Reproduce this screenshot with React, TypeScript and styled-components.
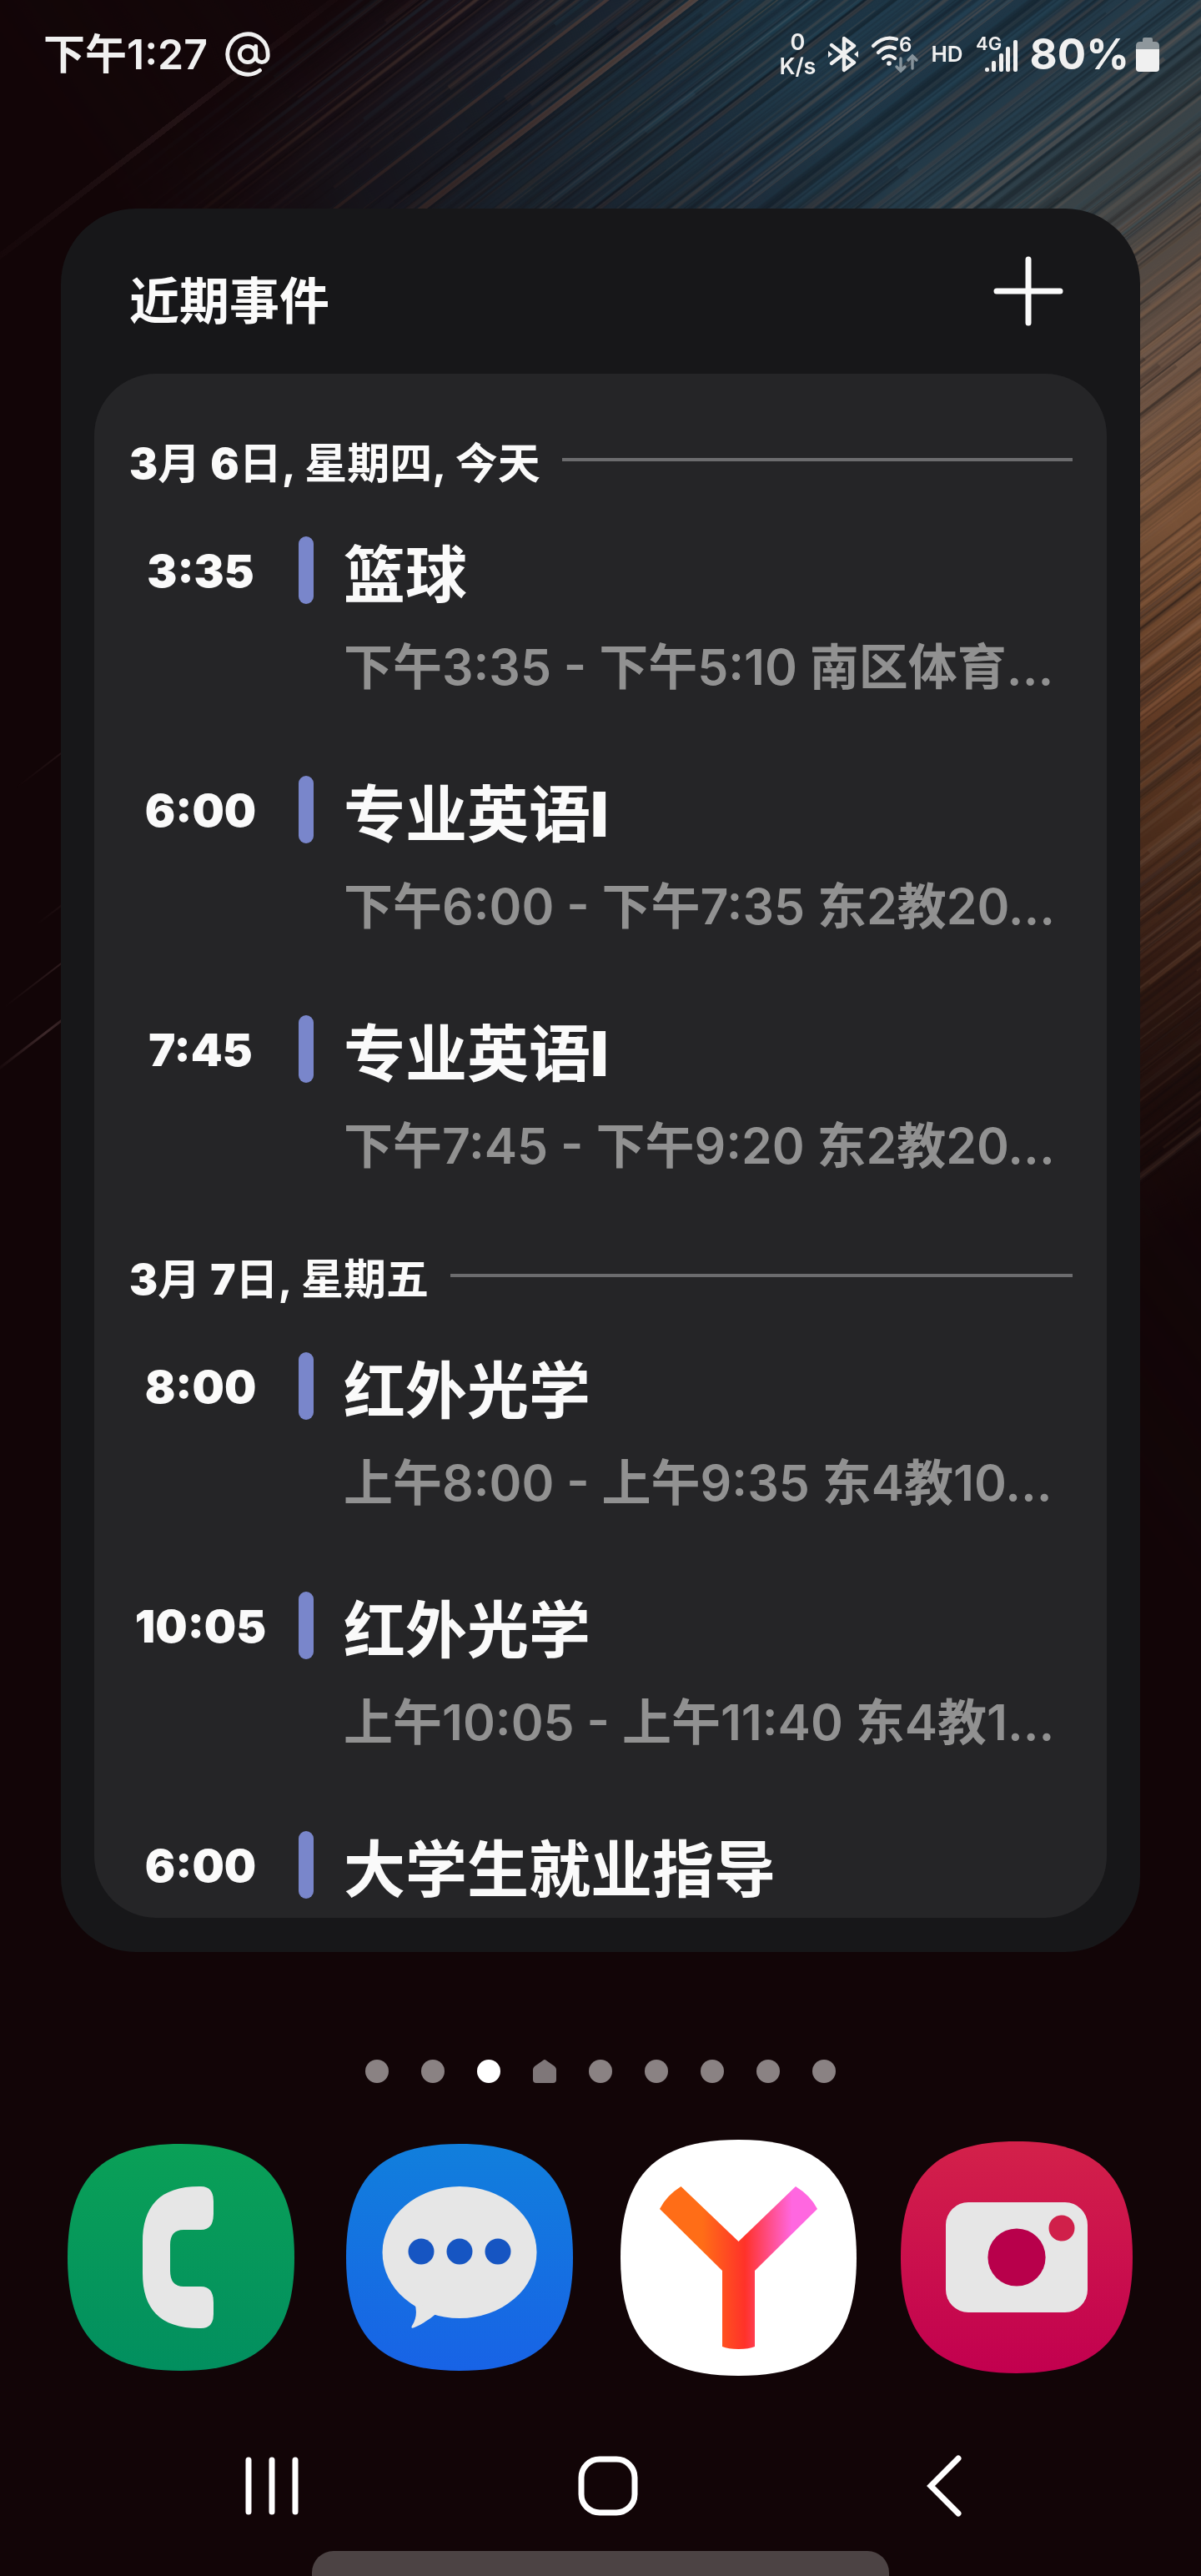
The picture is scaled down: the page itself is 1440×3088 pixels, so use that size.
import React from "react";
import styled, { createGlobalStyle } from "styled-components";
import { AtSign } from "lucide-react";

const GlobalStyle = createGlobalStyle`
  *, *::before, *::after { box-sizing: border-box; }
  body {
    margin: 0;
    background: #120507;
    font-family: Inter, "Noto Sans CJK SC", sans-serif;
    color: #fafafa;
  }
  h1, h2, h3, p, ul { margin: 0; padding: 0; font: inherit; }
  ul { list-style: none; }
  button { border: 0; padding: 0; background: none; color: inherit; cursor: pointer; }
  svg { display: block; }
`;

/* ---------- wallpaper ---------- */

const Screen = styled.div`
  position: relative;
  display: flex;
  flex-direction: column;
  min-height: 100vh;
  overflow: hidden;
`;

const WallpaperArt = styled.svg`
  position: absolute;
  inset: 0;
  width: 100%;
  height: 100%;
  z-index: -1;
`;

type Streak = { x: number; y: number; w: number; h: number; fill: string; o: number };

function makeStreaks(): Streak[] {
  let seed = 7;
  const rnd = () => {
    seed = (seed * 1664525 + 1013904223) % 4294967296;
    return seed / 4294967296;
  };
  const out: Streak[] = [];
  for (let i = 0; i < 760; i++) {
    const y = 260 + rnd() * 1700;
    const warm = y > 1050;
    const pick = rnd();
    const fill =
      pick < 0.5 ? "#05090f" : warm ? (pick < 0.75 ? "#a87450" : "#8c6e5c") : pick < 0.82 ? "#96705c" : "#2f6078";
    out.push({
      x: -300 + rnd() * 900,
      y,
      w: 900 + rnd() * 700,
      h: 1 + rnd() * rnd() * 8,
      fill,
      o: 0.06 + rnd() * 0.18,
    });
  }
  return out;
}
const streaks = makeStreaks();

const bands: [number, string][] = [
  [0, "#120507"],
  [250, "#14080c"],
  [350, "#1d1a24"],
  [430, "#1a2734"],
  [540, "#1c3342"],
  [760, "#1f3646"],
  [880, "#273d4a"],
  [980, "#3a4347"],
  [1080, "#4f4843"],
  [1200, "#6b5344"],
  [1340, "#775137"],
  [1520, "#71462a"],
  [1660, "#5a3620"],
  [1780, "#402417"],
  [1900, "#24120d"],
  [2030, "#120507"],
  [2400, "#120507"],
];

function Wallpaper() {
  return (
    <WallpaperArt viewBox="0 0 1440 3088" preserveAspectRatio="xMidYMin slice" aria-hidden="true">
      <defs>
        <linearGradient id="bands" x1="0" y1="0" x2="0" y2="1">
          {bands.map(([y, c]) => (
            <stop key={y} offset={y / 2400} stopColor={c} />
          ))}
        </linearGradient>
        <linearGradient id="fade" gradientUnits="userSpaceOnUse" x1="-40" y1="0" x2="740" y2="0">
          <stop offset="0" stopColor="#000" />
          <stop offset="0.3" stopColor="#606060" />
          <stop offset="0.7" stopColor="#c0c0c0" />
          <stop offset="1" stopColor="#fff" />
        </linearGradient>
        <mask id="fadeMask" maskUnits="userSpaceOnUse" x="-400" y="0" width="2100" height="2400">
          <rect x="-400" width="2100" height="2400" fill="url(#fade)" />
        </mask>
        <linearGradient id="hair" x1="0" y1="0" x2="1" y2="0">
          <stop offset="0" stopColor="#5a4042" stopOpacity="0" />
          <stop offset="0.5" stopColor="#5a4042" stopOpacity="0.6" />
          <stop offset="1" stopColor="#5a4042" stopOpacity="0" />
        </linearGradient>
      </defs>
      <rect width="1440" height="3088" fill="#120507" />
      <g transform="rotate(-37.5)">
        <g mask="url(#fadeMask)">
          <rect x="-400" width="2100" height="2400" fill="url(#bands)" />
          {streaks.map((s, i) => (
            <rect key={i} x={s.x} y={s.y} width={s.w} height={s.h} fill={s.fill} opacity={s.o} />
          ))}
          <rect x="120" y="503" width="700" height="7" fill="#8a6250" opacity="0.5" />
          <rect x="100" y="441" width="800" height="4" fill="#8a6250" opacity="0.4" />
        </g>
        <rect x="-240" y="240" width="620" height="7" fill="url(#hair)" opacity="0.35" />
        <rect x="-790" y="1014" width="160" height="3" fill="url(#hair)" />
        <rect x="-730" y="960" width="160" height="2" fill="url(#hair)" opacity="0.6" />
        <rect x="-640" y="905" width="180" height="2" fill="url(#hair)" opacity="0.6" />
        <rect x="-560" y="760" width="180" height="2" fill="url(#hair)" opacity="0.5" />
      </g>
    </WallpaperArt>
  );
}

/* ---------- status bar ---------- */

const StatusBar = styled.header`
  display: flex;
  align-items: center;
  justify-content: space-between;
  height: 130px;
  padding: 0 50px 0 52px;
  color: #f0f0f0;
`;

const StatusGroup = styled.div<{ $gap: number }>`
  display: flex;
  align-items: center;
  gap: ${(p) => p.$gap}px;
`;

const Clock = styled.span`
  font-size: 50px;
  line-height: 60px;
  font-weight: 600;
`;

const Speed = styled.span`
  display: flex;
  flex-direction: column;
  align-items: center;
  font-size: 27px;
  line-height: 29px;
  font-weight: 600;
`;

const Tag = styled.span`
  font-size: 26px;
  line-height: 32px;
  font-weight: 600;
`;

const Percent = styled.span`
  font-size: 51px;
  line-height: 60px;
  font-weight: 700;
`;

function BluetoothIcon() {
  return (
    <svg width="38" height="44" viewBox="0 0 38 44" fill="none" stroke="#f0f0f0" strokeWidth="4.4" strokeLinejoin="round" strokeLinecap="round">
      <path d="M5 11L32 32L20 41V3L32 12L5 33" />
      <path d="M1 18L6 22L1 26ZM37 18L32 22L37 26Z" fill="#f0f0f0" stroke="none" />
    </svg>
  );
}

function WifiIcon() {
  return (
    <svg width="58" height="64" viewBox="0 -10 58 64" fill="none" stroke="#f0f0f0" strokeWidth="4.2" strokeLinecap="round">
      <path d="M3 12Q16-1 31 4" />
      <path d="M9 20Q19 10 29 15" />
      <path d="M15 27Q22 21 29 27" />
      <circle cx="22" cy="33" r="2.8" fill="#f0f0f0" stroke="none" />
      <text x="34" y="19" fontSize="24" fontWeight="600" fill="#f0f0f0" stroke="none">6</text>
      <g stroke="#86939b" strokeWidth="3.4">
        <path d="M36 27V41M31 37L36 42L41 37" />
        <path d="M50 39V25M45 29L50 24L55 29" />
      </g>
    </svg>
  );
}

function SignalIcon() {
  return (
    <svg width="52" height="64" viewBox="0 -10 52 64" fill="#f0f0f0">
      <text x="1" y="17" fontSize="22" fontWeight="600">4G</text>
      <rect x="12" y="38" width="5" height="5" rx="2" />
      <rect x="20" y="30" width="5" height="13" rx="2" />
      <rect x="29" y="21" width="5" height="22" rx="2" />
      <rect x="37" y="13" width="5" height="30" rx="2" />
      <rect x="46" y="5" width="5" height="38" rx="2" />
    </svg>
  );
}

function BatteryIcon() {
  return (
    <svg width="28" height="42" viewBox="0 0 28 42">
      <path d="M8 3Q8 1 10 1H18Q20 1 20 3V6H23Q28 6 28 11V15H0V11Q0 6 5 6H8Z" fill="#8e979c" />
      <path d="M0 15H28V38Q28 42 24 42H4Q0 42 0 38Z" fill="#f0f0f0" />
    </svg>
  );
}

/* ---------- calendar widget ---------- */

const Widget = styled.section`
  display: flex;
  flex-direction: column;
  height: 2090px;
  margin: 120px 73px 0;
  padding: 0 40px 41px;
  border-radius: 90px;
  background: #171719;
`;

const WidgetHeader = styled.div`
  display: flex;
  align-items: flex-start;
  justify-content: space-between;
  flex: none;
  height: 198px;
  padding: 57px 52px 0 42px;
`;

const WidgetTitle = styled.h1`
  font-size: 60px;
  line-height: 108px;
  font-weight: 700;
`;

const AddButton = styled.button`
  display: block;
  width: 84px;
  height: 84px;
`;

const Agenda = styled.div`
  flex: 1;
  min-height: 0;
  overflow: hidden;
  padding: 78px 41px 0 42px;
  border-radius: 74px;
  background: #252527;
`;

const DayHeader = styled.div`
  display: flex;
  align-items: center;
  gap: 26px;
  height: 60px;
  margin-bottom: 57px;

  &::after {
    content: "";
    flex: 1;
    height: 4px;
    margin-bottom: 10px;
    background: #6c6c6e;
  }
`;

const DayName = styled.h2`
  font-size: 51px;
  line-height: 60px;
  font-weight: 700;
  white-space: nowrap;
`;

const Heavy = styled.span`
  font-weight: 900;
`;

const EventRow = styled.li`
  display: grid;
  grid-template-columns: 171px 18px minmax(0, 1fr);
  column-gap: 32px;
  height: 287px;
`;

const EventTime = styled.time`
  font-size: 54px;
  line-height: 84px;
  font-weight: 900;
  text-align: center;
`;

const EventBar = styled.span`
  height: 81px;
  border-radius: 9px;
  background: #7986cb;
`;

const EventText = styled.div`
  padding-left: 4px;
`;

const EventTitle = styled.h3`
  font-size: 74px;
  line-height: 92px;
  font-weight: 700;
  white-space: nowrap;
`;

const EventDetail = styled.p`
  margin-top: 20px;
  font-size: 59px;
  line-height: 90px;
  font-weight: 600;
  color: #919191;
  white-space: nowrap;
`;

/* Latin letters and digits are set heavier than the Chinese around them. */
function Mixed({ text }: { text: string }) {
  return (
    <>
      {text.split(/([0-9A-Z]+)/).map((part, i) => (i % 2 ? <Heavy key={i}>{part}</Heavy> : part))}
    </>
  );
}

type CalEvent = { time: string; title: string; detail: string };
const days: { name: string; events: CalEvent[] }[] = [
  {
    name: "3月 6日, 星期四, 今天",
    events: [
      { time: "3:35", title: "篮球", detail: "下午3:35 - 下午5:10 南区体育..." },
      { time: "6:00", title: "专业英语I", detail: "下午6:00 - 下午7:35 东2教20..." },
      { time: "7:45", title: "专业英语I", detail: "下午7:45 - 下午9:20 东2教20..." },
    ],
  },
  {
    name: "3月 7日, 星期五",
    events: [
      { time: "8:00", title: "红外光学", detail: "上午8:00 - 上午9:35 东4教10..." },
      { time: "10:05", title: "红外光学", detail: "上午10:05 - 上午11:40 东4教1..." },
      { time: "6:00", title: "大学生就业指导", detail: "" },
    ],
  },
];

/* ---------- page dots, dock, navigation ---------- */

const Pager = styled.div`
  display: flex;
  justify-content: center;
  gap: 39px;
  margin-top: 129px;
`;

const Dot = styled.button<{ $active?: boolean }>`
  width: 28px;
  height: 28px;
  border-radius: 50%;
  background: ${(p) => (p.$active ? "#ffffff" : "#8a8283")};
`;

const HomeDot = styled.button`
  width: 28px;
  height: 28px;
`;

const Dock = styled.nav`
  display: grid;
  grid-template-columns: repeat(4, 1fr);
  align-items: center;
  justify-items: center;
  height: 284px;
  margin-top: 67px;
  padding: 0 54px 0 50px;
`;

const NavBar = styled.nav`
  display: grid;
  grid-template-columns: repeat(3, 1fr);
  align-items: center;
  justify-items: center;
  height: 74px;
  margin-top: 95px;
  padding: 0 107px 0 125px;
`;

const Handle = styled.div`
  width: 48%;
  height: 30px;
  margin: auto auto 0;
  border-radius: 26px 26px 0 0;
  background: #4c4344;
`;

const SQUIRCLE = "M50 0C85 0 100 15 100 50S85 100 50 100 0 85 0 50 15 0 50 0Z";

function AppTile({ size, id, from, to, children }: { size: number; id: string; from: string; to: string; children: React.ReactNode }) {
  return (
    <svg width={size} height={size} viewBox={`0 0 ${size} ${size}`}>
      <defs>
        <linearGradient id={id} x1="0" y1="0" x2="0" y2="1">
          <stop offset="0" stopColor={from} />
          <stop offset="1" stopColor={to} />
        </linearGradient>
      </defs>
      <path d={SQUIRCLE} transform={`scale(${size / 100})`} fill={`url(#${id})`} />
      {children}
    </svg>
  );
}

function PhoneTile() {
  return (
    <AppTile size={272} id="phone" from="#0aa057" to="#028f5f">
      <path
        d="M158 51C110 51 90 75 90 118V155C90 197 110 221 158 221H160Q175 221 175 204V190Q175 171 160 171H139Q123 171 123 152V121Q123 103 139 103H160Q175 103 175 84V69Q175 51 160 51Z"
        fill="#e6e6e6"
      />
    </AppTile>
  );
}

function MessagesTile() {
  return (
    <AppTile size={272} id="messages" from="#117fdc" to="#1863e6">
      <ellipse cx="136" cy="130" rx="92.5" ry="79" fill="#e6e6e6" />
      <path d="M82 190Q87 206 79 218Q77 222 82 220Q96 214 110 202Z" fill="#e6e6e6" />
      <g fill="#1655c2">
        <circle cx="90" cy="129" r="15.5" />
        <circle cx="136" cy="129" r="15.5" />
        <circle cx="182" cy="129" r="15.5" />
      </g>
    </AppTile>
  );
}

function BrowserTile() {
  return (
    <AppTile size={283} id="browser" from="#ffffff" to="#ffffff">
      <defs>
        <linearGradient id="ray" gradientUnits="userSpaceOnUse" x1="47" y1="0" x2="236" y2="0">
          <stop offset="0.27" stopColor="#ff6d17" />
          <stop offset="0.54" stopColor="#ff3229" />
          <stop offset="0.84" stopColor="#ff67e0" />
        </linearGradient>
      </defs>
      <path
        d="M72.5 56L141.5 122L210 56Q228 67 236 83L161 157V248Q154 251 141.5 251T122 248V157L47 83Q55 67 72.5 56Z"
        fill="url(#ray)"
      />
    </AppTile>
  );
}

function CameraTile() {
  return (
    <AppTile size={278} id="camera" from="#d3214a" to="#c2004f">
      <rect x="54" y="73" width="170" height="132" rx="27" fill="#e6e6e6" />
      <circle cx="139" cy="139" r="34.6" fill="#b8004b" />
      <circle cx="193" cy="104" r="15.5" fill="#d0204a" />
    </AppTile>
  );
}

const apps = [
  { label: "电话", Tile: PhoneTile },
  { label: "信息", Tile: MessagesTile },
  { label: "浏览器", Tile: BrowserTile },
  { label: "相机", Tile: CameraTile },
];

export default function App() {
  return (
    <>
      <GlobalStyle />
      <Screen>
        <Wallpaper />
        <StatusBar>
          <StatusGroup $gap={19}>
            <Clock>下午1:27</Clock>
            <AtSign size={58} strokeWidth={2} />
          </StatusGroup>
          <StatusGroup $gap={14}>
            <Speed>
              <span>0</span>
              <span>K/s</span>
            </Speed>
            <BluetoothIcon />
            <WifiIcon />
            <Tag>HD</Tag>
            <SignalIcon />
            <StatusGroup $gap={8}>
              <Percent>80%</Percent>
              <BatteryIcon />
            </StatusGroup>
          </StatusGroup>
        </StatusBar>

        <Widget>
          <WidgetHeader>
            <WidgetTitle>近期事件</WidgetTitle>
            <AddButton aria-label="添加事件">
              <svg width="84" height="84" viewBox="0 0 84 84" stroke="#fafafa" strokeWidth="7" strokeLinecap="round">
                <path d="M42 4V80M4 42H80" />
              </svg>
            </AddButton>
          </WidgetHeader>
          <Agenda>
            {days.map((day) => (
              <section key={day.name}>
                <DayHeader>
                  <DayName>
                    <Mixed text={day.name} />
                  </DayName>
                </DayHeader>
                <ul>
                  {day.events.map((e) => (
                    <EventRow key={e.time}>
                      <EventTime>{e.time}</EventTime>
                      <EventBar />
                      <EventText>
                        <EventTitle>
                          <Mixed text={e.title} />
                        </EventTitle>
                        {e.detail && <EventDetail>{e.detail}</EventDetail>}
                      </EventText>
                    </EventRow>
                  ))}
                </ul>
              </section>
            ))}
          </Agenda>
        </Widget>

        <Pager>
          {[0, 1, 2, 3, 4, 5, 6, 7, 8].map((n) =>
            n === 3 ? (
              <HomeDot key={n} aria-label="主屏幕">
                <svg width="28" height="28" viewBox="0 0 28 28" fill="#7f7779">
                  <path d="M12 1Q14-1 16 1L26 8Q28 10 28 12V24Q28 28 24 28H4Q0 28 0 24V12Q0 10 2 8Z" />
                </svg>
              </HomeDot>
            ) : (
              <Dot key={n} $active={n === 2} aria-label={`第${n + 1}页`} />
            )
          )}
        </Pager>

        <Dock>
          {apps.map(({ label, Tile }) => (
            <button key={label} aria-label={label}>
              <Tile />
            </button>
          ))}
        </Dock>

        <NavBar>
          <button aria-label="最近">
            <svg width="64" height="70" viewBox="0 0 64 70" stroke="#fff" strokeWidth="7" strokeLinecap="round">
              <path d="M4 4V66M32 4V66M60 4V66" />
            </svg>
          </button>
          <button aria-label="主页">
            <svg width="72" height="72" viewBox="0 0 72 72" fill="none" stroke="#fff" strokeWidth="7">
              <rect x="4" y="4" width="64" height="64" rx="22" />
            </svg>
          </button>
          <button aria-label="返回">
            <svg width="44" height="74" viewBox="0 0 44 74" fill="none" stroke="#fff" strokeWidth="7" strokeLinecap="round">
              <path d="M39 4L6 37L39 70" />
            </svg>
          </button>
        </NavBar>
        <Handle />
      </Screen>
    </>
  );
}
